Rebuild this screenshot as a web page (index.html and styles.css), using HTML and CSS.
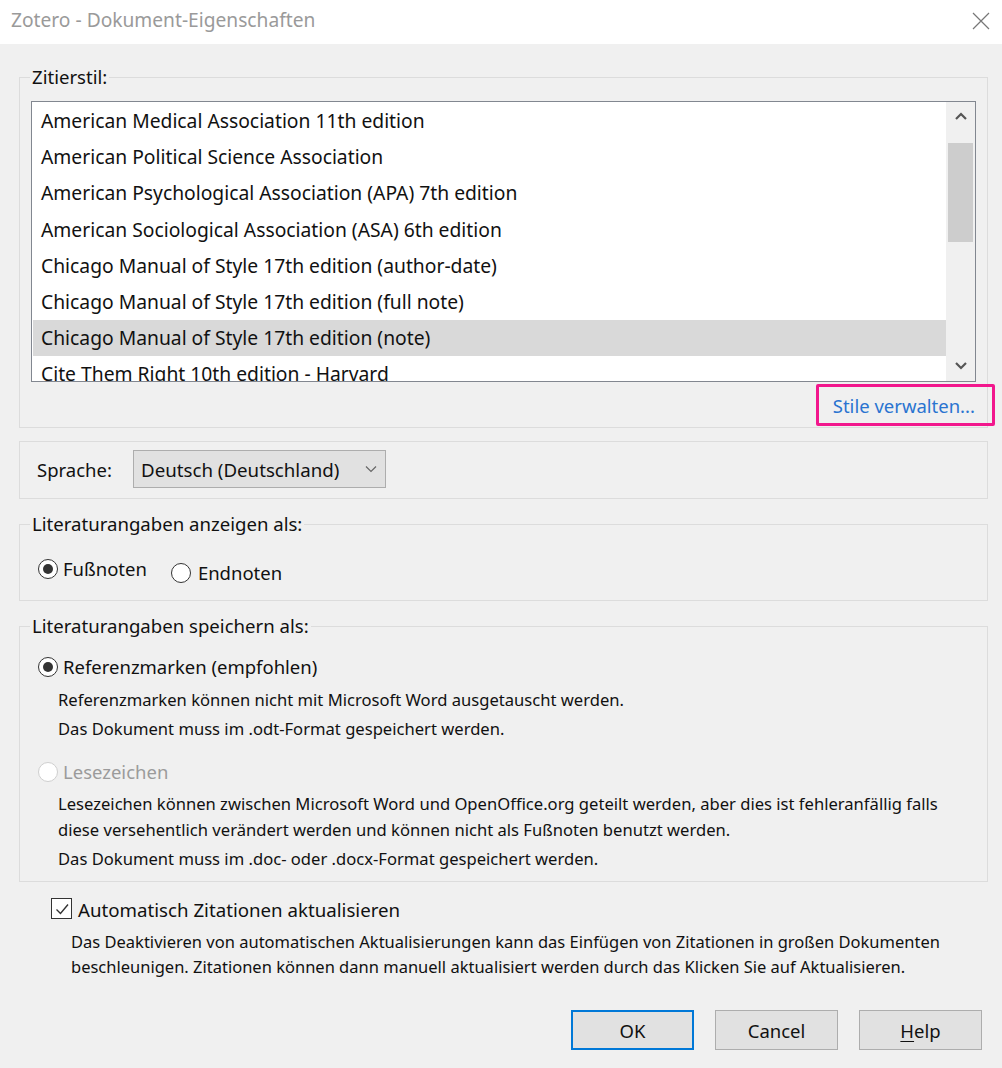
FILE: index.html
```html
<!DOCTYPE html>
<html lang="de">
<head>
<meta charset="utf-8">
<title>Zotero - Dokument-Eigenschaften</title>
<link rel="stylesheet" href="styles.css">
</head>
<body>
<div class="titlebar">
  <span class="title">Zotero - Dokument-Eigenschaften</span>
  <svg class="close" width="18" height="18" viewBox="0 0 18 18"><path d="M1 1 L17 17 M17 1 L1 17" stroke="#777" stroke-width="1.2" fill="none"/></svg>
</div>
<div class="dialog">
  <fieldset class="group styles">
    <legend>Zitierstil:</legend>
    <div class="listbox">
      <ul class="items">
        <li>American Medical Association 11th edition</li>
        <li>American Political Science Association</li>
        <li>American Psychological Association (APA) 7th edition</li>
        <li>American Sociological Association (ASA) 6th edition</li>
        <li>Chicago Manual of Style 17th edition (author-date)</li>
        <li>Chicago Manual of Style 17th edition (full note)</li>
        <li class="selected">Chicago Manual of Style 17th edition (note)</li>
        <li>Cite Them Right 10th edition - Harvard</li>
      </ul>
      <div class="scrollbar">
        <svg class="arrow" width="14" height="10" viewBox="0 0 14 10"><path d="M2 8 L7 3 L12 8" stroke="#555" stroke-width="2.2" fill="none"/></svg>
        <div class="track"><div class="thumb"></div></div>
        <svg class="arrow" width="14" height="10" viewBox="0 0 14 10"><path d="M2 2 L7 7 L12 2" stroke="#555" stroke-width="2.2" fill="none"/></svg>
      </div>
    </div>
    <div class="manage"><a class="link">Stile verwalten...</a></div>
  </fieldset>

  <div class="group lang">
    <span class="label">Sprache:</span>
    <div class="select">
      <span>Deutsch (Deutschland)</span>
      <svg width="12" height="8" viewBox="0 0 12 8"><path d="M1 1.5 L6 6.5 L11 1.5" stroke="#666" stroke-width="1.2" fill="none"/></svg>
    </div>
  </div>

  <fieldset class="group display">
    <legend>Literaturangaben anzeigen als:</legend>
    <div class="radios">
      <label class="radio checked"><span class="dot"></span>Fußnoten</label>
      <label class="radio endnote"><span class="dot"></span>Endnoten</label>
    </div>
  </fieldset>

  <fieldset class="group store">
    <legend>Literaturangaben speichern als:</legend>
    <label class="radio checked"><span class="dot"></span>Referenzmarken (empfohlen)</label>
    <div class="desc first">
      <p>Referenzmarken können nicht mit Microsoft Word ausgetauscht werden.</p>
      <p>Das Dokument muss im .odt-Format gespeichert werden.</p>
    </div>
    <label class="radio disabled second"><span class="dot"></span>Lesezeichen</label>
    <div class="desc">
      <p>Lesezeichen können zwischen Microsoft Word und OpenOffice.org geteilt werden, aber dies ist fehleranfällig falls diese versehentlich verändert werden und können nicht als Fußnoten benutzt werden.</p>
      <p>Das Dokument muss im .doc- oder .docx-Format gespeichert werden.</p>
    </div>
  </fieldset>

  <div class="auto">
    <label class="check">
      <span class="box"><svg width="18" height="18" viewBox="0 0 18 18"><path d="M3.5 9.5 L7.5 13.5 L15 4.5" stroke="#333" stroke-width="1.4" fill="none"/></svg></span>
      Automatisch Zitationen aktualisieren
    </label>
    <p class="autodesc">Das Deaktivieren von automatischen Aktualisierungen kann das Einfügen von Zitationen in großen Dokumenten beschleunigen. Zitationen können dann manuell aktualisiert werden durch das Klicken Sie auf Aktualisieren.</p>
  </div>

  <div class="buttons">
    <button class="btn default">OK</button>
    <button class="btn">Cancel</button>
    <button class="btn"><u>H</u>elp</button>
  </div>
</div>
</body>
</html>
```
FILE: styles.css
```css
* { box-sizing: border-box; }
html, body { margin: 0; padding: 0; }
body {
  background: #f0f0f0;
  font-family: "Noto Sans", "Open Sans", sans-serif;
  color: #111;
  width: 1002px;
  height: 1068px;
  overflow: hidden;
}
.titlebar {
  height: 44px;
  background: #fff;
  display: flex;
  align-items: center;
  justify-content: space-between;
  padding: 0 12px 5px 11px;
}
.title {
  color: #9a9a9a;
  font-size: 19.2px;
}
.close { margin-top: 2px; }

.dialog {
  padding: 0 14px 0 19px;
}
.group {
  border: 1px solid #dcdcdc;
  margin: 0;
  min-width: 0;
}
legend {
  font-size: 18.6px;
  line-height: 24px;
  padding: 0 2px;
}
.display legend, .store legend { margin-left: -8px; }

.styles {
  margin-top: 21px;
  padding: 12px 11px 9px 11px;
}
.styles legend { margin-left: -1px; }
.listbox {
  height: 281px;
  border: 1px solid #828790;
  background: #fff;
  display: flex;
  padding: 1px 0 1px 1px;
  overflow: hidden;
}
.items {
  list-style: none;
  margin: 0;
  padding: 0;
  flex: 1;
  font-size: 19.3px;
}
.items li {
  height: 36.2px;
  line-height: 35px;
  padding-left: 8px;
  white-space: nowrap;
}
.items li.selected { background: #d9d9d9; }
.scrollbar {
  width: 29px;
  background: #f0f0f0;
  display: flex;
  flex-direction: column;
  align-items: center;
  margin-top: -1px;
  margin-bottom: -1px;
}
.scrollbar .arrow { margin: 9px 0 6px; flex: none; }
.scrollbar .arrow:last-child { margin: 6px 0 10px; }
.track { flex: 1; width: 100%; padding: 0 2px; }
.thumb {
  margin-top: 16px;
  height: 99px;
  background: #cdcdcd;
}
.manage {
  display: flex;
  justify-content: flex-end;
  margin-top: 12px;
}
.link {
  position: relative;
  color: #2a74d0;
  font-size: 18.5px;
  line-height: 24px;
  padding-right: 1px;
}
.link::after {
  content: "";
  position: absolute;
  left: -17px;
  right: -19px;
  top: -10px;
  bottom: -8px;
  border: 3px solid #f2178d;
  border-radius: 2px;
}

.lang {
  margin-top: 13px;
  display: flex;
  align-items: center;
  padding: 8px 0 10px 17px;
}
.label { font-size: 18.5px; width: 96px; }
.select {
  width: 253px;
  height: 38px;
  background: #e1e1e1;
  border: 1px solid #adadad;
  display: flex;
  align-items: center;
  justify-content: space-between;
  padding: 0 8px 0 7px;
  font-size: 18.7px;
}

.display {
  margin-top: 13px;
  padding: 21px 18px 15px;
}
.radios { display: flex; align-items: flex-start; }
.radio {
  display: flex;
  align-items: center;
  font-size: 18.5px;
  line-height: 24px;
}
.dot {
  width: 20px;
  height: 20px;
  border: 1px solid #333;
  border-radius: 50%;
  background: #fff;
  margin-right: 5px;
  flex: none;
  position: relative;
}
.radio.checked .dot::after {
  content: "";
  position: absolute;
  left: 4px;
  top: 4px;
  width: 10px;
  height: 10px;
  border-radius: 50%;
  background: #333;
}
.radio.endnote { margin-left: 24px; margin-top: 4px; }
.radio.endnote .dot { margin-right: 7px; }
.radio.disabled { color: #9b9b9b; }
.radio.disabled .dot { border-color: #cfcfcf; }

.store {
  margin-top: 13px;
  padding: 17px 18px 9px;
}
.desc {
  margin: 7px 0 0 20px;
  font-size: 16.6px;
  line-height: 26px;
}
.desc.first { margin-top: 8px; }
.desc p { margin: 3px 0 0; }
.desc p:first-child { margin-top: 0; }
.radio.second { margin-top: 18px; }

.auto {
  padding-left: 32px;
  margin-top: 16px;
}
.check {
  display: flex;
  align-items: center;
  font-size: 18.7px;
  line-height: 24px;
}
.box {
  width: 21px;
  height: 21px;
  border: 1px solid #333;
  background: #fff;
  margin-right: 6px;
  margin-top: -3px;
  display: flex;
  align-items: center;
  justify-content: center;
}
.autodesc {
  margin: 7px 0 0 20px;
  font-size: 16.5px;
  line-height: 25px;
}

.buttons {
  display: flex;
  justify-content: flex-end;
  gap: 21px;
  margin-top: 31px;
  padding-right: 6px;
}
.btn {
  width: 123px;
  height: 40px;
  background: #e1e1e1;
  border: 1px solid #adadad;
  font-family: "Noto Sans", "Open Sans", sans-serif;
  font-size: 18.5px;
  color: #111;
  padding: 0;
}
.btn.default {
  border: 2px solid #0078d7;
}
.btn u { text-underline-offset: 3px; }
```
